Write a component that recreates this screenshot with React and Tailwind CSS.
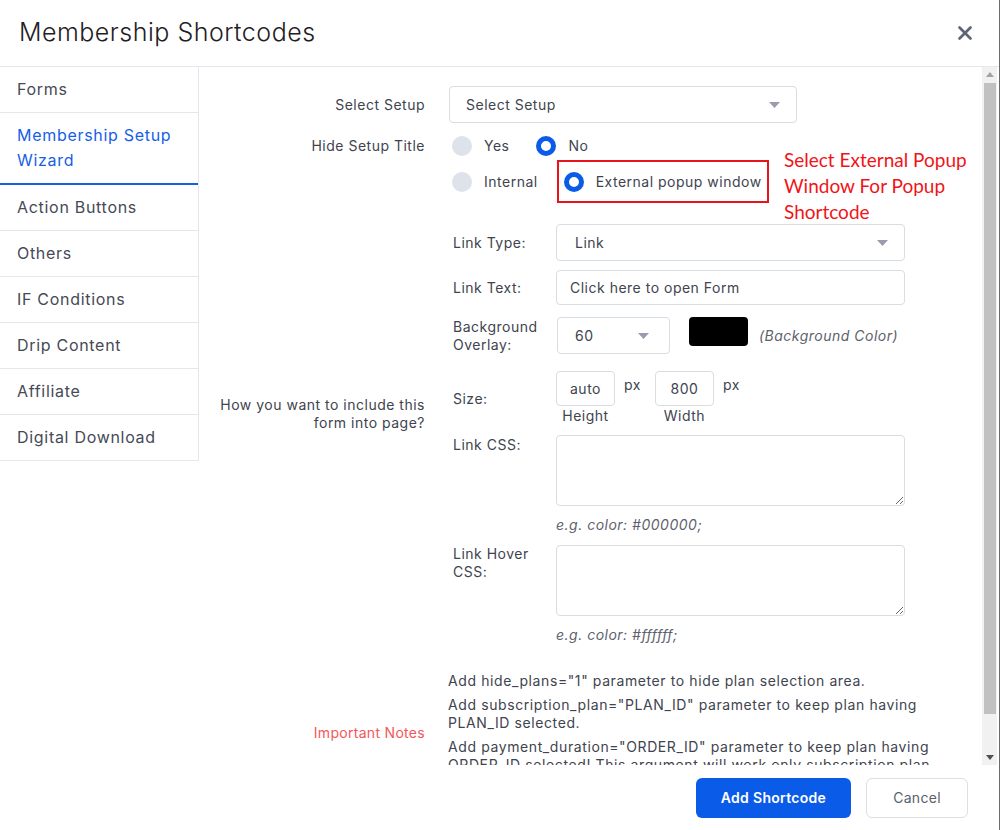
import { X } from 'lucide-react';

const font = { fontFamily: 'Inter, "Open Sans", sans-serif' };

const sideItems = [
  'Forms',
  'Membership Setup Wizard',
  'Action Buttons',
  'Others',
  'IF Conditions',
  'Drip Content',
  'Affiliate',
  'Digital Download',
];

const Caret = () => (
  <svg width="11" height="6" viewBox="0 0 11 6" className="shrink-0">
    <path d="M0 0 L11 0 L5.5 6 Z" fill="#9b9bb0" />
  </svg>
);

const Radio = ({ checked, label }) => (
  <div className="flex items-center gap-3">
    {checked ? (
      <span className="w-5 h-5 rounded-full border-[5px] border-[#0a5ce8] bg-white" />
    ) : (
      <span className="w-5 h-5 rounded-full bg-[#dde2eb]" />
    )}
    <span className="text-[14px] text-[#40444f]">{label}</span>
  </div>
);

// classic scrollbar, drawn since the page's own is hidden in screenshots
const ScrollBar = () => (
  <div className="w-[15px] shrink-0 self-stretch bg-[#f1f1f1] flex flex-col">
    <div className="h-[15px] flex items-center justify-center">
      <svg width="8" height="5" viewBox="0 0 8 5">
        <path d="M0 5 L8 5 L4 0 Z" fill="#a3a3a3" />
      </svg>
    </div>
    <div className="flex-1 pt-[1px]">
      <div className="ml-[2px] mr-[1px] h-[631px] bg-[#c1c1c1]" />
    </div>
    <div className="h-[15px] flex items-center justify-center">
      <svg width="8" height="5" viewBox="0 0 8 5">
        <path d="M0 0 L8 0 L4 5 Z" fill="#505050" />
      </svg>
    </div>
  </div>
);

const App = () => {
  return (
    <div
      className="w-[1000px] h-[830px] bg-white flex flex-col border-r border-[#6b6b6b] overflow-hidden tracking-[0.5px]"
      style={font}
    >
      {/* Header */}
      <div className="h-[67px] shrink-0 flex items-center justify-between pl-[19px] pr-[23px] border-b border-[#e3e7ee]">
        <h1 className="text-[25px] font-light text-[#1f2023] tracking-[0.5px]">Membership Shortcodes</h1>
        <X size={22} strokeWidth={3} className="text-[#5f6673]" />
      </div>

      {/* Body */}
      <div className="flex-1 min-h-0 mr-[2px] flex">
        <div className="flex-1 overflow-hidden flex items-start">
          <div className="w-[199px] shrink-0 border-r border-[#e3e7ee] tracking-[0.7px]">
            {sideItems.map((item, i) => {
              const active = i === 1;
              return (
                <div
                  key={item}
                  className={`pl-[17px] pr-3 py-[10px] text-[16px] leading-[25px] ${
                    active
                      ? 'text-[#1660e6] border-b-2 border-[#1660e6]'
                      : 'text-[#454a56] border-b border-[#e3e7ee]'
                  }`}
                >
                  {item}
                </div>
              );
            })}
          </div>

          <div className="flex-1 pt-[19px] pb-[16px] text-[14px] text-[#40444f]">
            {/* Select Setup */}
            <div className="flex items-center">
              <div className="w-[226px] text-right">Select Setup</div>
              <div className="ml-[24px] w-[348px] h-[37px] border border-[#d8dce3] rounded flex items-center justify-between pl-4 pr-[16px]">
                <span className="text-[14px]">Select Setup</span>
                <Caret />
              </div>
            </div>

            {/* Hide Setup Title */}
            <div className="flex items-center mt-[12px]">
              <div className="w-[226px] text-right">Hide Setup Title</div>
              <div className="ml-[27px] flex items-center gap-[27px]">
                <Radio label="Yes" />
                <Radio checked label="No" />
              </div>
            </div>

            {/* Include form */}
            <div className="flex items-center mt-[4px]">
              <div className="w-[226px] text-right leading-[18px] pt-[22px]">
                How you want to include this
                <br />
                form into page?
              </div>
              <div className="ml-[24px]">
                <div className="relative flex items-center ml-[3px]">
                  <Radio label="Internal" />
                  <div className="ml-[19px] border-2 border-[#e8141c] h-[43px] flex items-center pl-[5px] pr-[5px]">
                    <Radio checked label="External popup window" />
                  </div>
                  <div
                    className="absolute left-[332px] top-[-13px] w-[200px] text-[19px] leading-[26px] text-[#f01418] tracking-normal"
                    style={{ fontFamily: 'Lato, "Open Sans", sans-serif' }}
                  >
                    Select External Popup Window For Popup Shortcode
                  </div>
                </div>

                <div className="ml-[4px] mt-[21px] flex flex-col">
                  <div className="flex items-center">
                    <div className="w-[103px]">Link Type:</div>
                    <div className="w-[349px] h-[37px] border border-[#d8dce3] rounded flex items-center justify-between pl-[18px] pr-[16px]">
                      <span>Link</span>
                      <Caret />
                    </div>
                  </div>
                  <div className="flex items-center mt-[9px]">
                    <div className="w-[103px]">Link Text:</div>
                    <div className="w-[349px] h-[35px] border border-[#d8dce3] rounded flex items-center pl-[13px]">
                      Click here to open Form
                    </div>
                  </div>
                  <div className="flex items-center mt-[12px]">
                    <div className="w-[104px] leading-[18px]">
                      Background
                      <br />
                      Overlay:
                    </div>
                    <div className="w-[113px] h-[37px] border border-[#d8dce3] rounded flex items-center justify-between pl-[17px] pr-[20px]">
                      <span>60</span>
                      <Caret />
                    </div>
                    <div className="ml-[19px] w-[59px] h-[29px] bg-black rounded self-start" />
                    <span className="ml-[11px] italic text-[#5d616c]">(Background Color)</span>
                  </div>
                  <div className="flex items-center mt-[17px]">
                    <div className="w-[103px]">Size:</div>
                    <div className="flex items-start">
                      <div className="flex flex-col items-center">
                        <div className="w-[59px] h-[35px] border border-[#d8dce3] rounded flex items-center justify-center">auto</div>
                        <span className="mt-[1px] leading-[18px]">Height</span>
                      </div>
                      <span className="ml-[9px] mt-[4px] leading-[20px]">px</span>
                      <div className="ml-[14px] flex flex-col items-center">
                        <div className="w-[59px] h-[35px] border border-[#d8dce3] rounded flex items-center justify-center">800</div>
                        <span className="mt-[1px] leading-[18px]">Width</span>
                      </div>
                      <span className="ml-[9px] mt-[4px] leading-[20px]">px</span>
                    </div>
                  </div>
                  <div className="flex items-start mt-[10px]">
                    <div className="w-[103px] leading-[20px]">Link CSS:</div>
                    <div>
                      <textarea className="block w-[349px] h-[71px] border border-[#d8dce3] rounded" />
                      <div className="mt-[9px] italic text-[#5d616c] leading-[20px]">e.g. color: #000000;</div>
                    </div>
                  </div>
                  <div className="flex items-start mt-[10px]">
                    <div className="w-[103px] leading-[18px]">
                      Link Hover
                      <br />
                      CSS:
                    </div>
                    <div>
                      <textarea className="block w-[349px] h-[71px] border border-[#d8dce3] rounded" />
                      <div className="mt-[9px] italic text-[#5d616c] leading-[20px]">e.g. color: #ffffff;</div>
                    </div>
                  </div>
                </div>
              </div>
            </div>

            {/* Important Notes */}
            <div className="flex items-center mt-[27px]">
              <div className="w-[226px] text-right text-[#f5565a] tracking-[0.3px]">Important Notes</div>
              <div className="ml-[23px] w-[495px] leading-[18px] flex flex-col gap-[6px] tracking-[0.6px]">
                <p>Add hide_plans="1" parameter to hide plan selection area.</p>
                <p>Add subscription_plan="PLAN_ID" parameter to keep plan having PLAN_ID selected.</p>
                <p>
                  Add payment_duration="ORDER_ID" parameter to keep plan having ORDER_ID selected! This argument
                  will work only subscription plan is selected.
                </p>
              </div>
            </div>
          </div>
        </div>
        <ScrollBar />
      </div>

      {/* Footer */}
      <div className="h-[65px] shrink-0 flex items-center justify-end gap-[15px] pr-[31px] tracking-[0.3px]">
        <button className="w-[155px] h-[40px] rounded-md bg-[#0a5be8] text-white text-[14px] font-semibold">
          Add Shortcode
        </button>
        <button className="w-[102px] h-[40px] rounded-md border border-[#dcdfe6] text-[#5a5f6b] text-[14px]">
          Cancel
        </button>
      </div>
    </div>
  );
};

export default App;
